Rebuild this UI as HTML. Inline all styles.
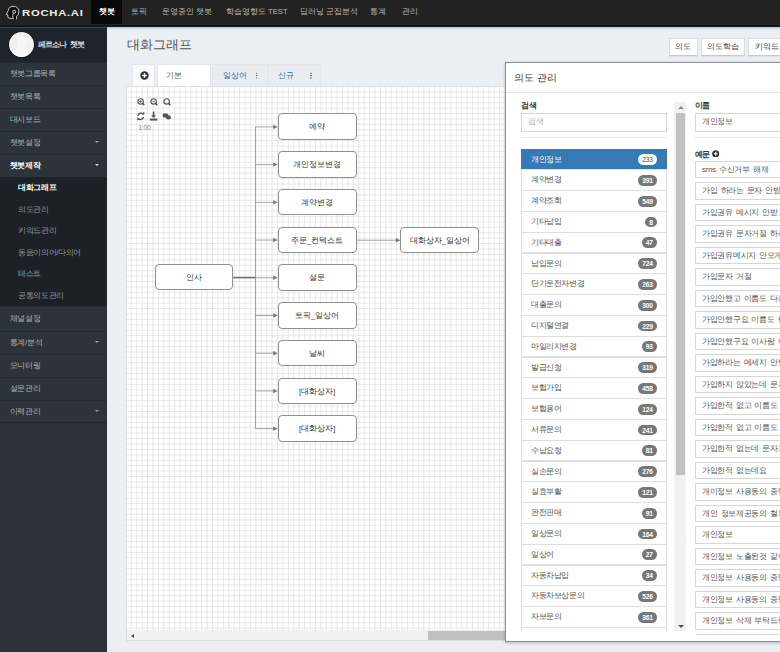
<!DOCTYPE html>
<html><head><meta charset="utf-8">
<style>
*{box-sizing:border-box;margin:0;padding:0}
html,body{width:780px;height:652px;overflow:hidden;background:#ebeef2;font-family:"Liberation Sans",sans-serif;}
.abs{position:absolute}
#nav{left:0;top:0;width:780px;height:26.5px;background:#222222;border-bottom:2px solid #0f1820}
#nav .it{position:absolute;top:0;height:24.3px;line-height:24px;font-size:7.6px;color:#b9b9b9;white-space:nowrap}
#nav .act{left:91px;width:31px;background:#090909;color:#fff;font-weight:bold;text-align:center}
#side{left:0;top:28px;width:107px;height:624px;background:#2d333a}
#prof{left:0;top:0;width:107px;height:34px;background:#1e242b}
.mi{position:absolute;left:0;width:107px;height:23px;line-height:22px;padding-left:9.6px;font-size:8px;letter-spacing:-0.3px;color:#adb2b7;border-top:1px solid #262b31;white-space:nowrap}
.mi .car{position:absolute;left:95px;top:9.2px;width:0;height:0;border-left:2.5px solid transparent;border-right:2.5px solid transparent;border-top:2.5px solid #9aa0a6}
#sub{left:0;top:149px;width:107px;height:129px;background:#1c2127}
.si{position:absolute;left:18px;height:21.5px;line-height:21.5px;font-size:8px;letter-spacing:-0.35px;color:#8f959b;white-space:nowrap}

.btn{top:37.7px;height:18.3px;background:#fff;border:1px solid #dcdcdc;border-bottom-color:#c8c8c8;font-size:8px;line-height:16.5px;text-align:center;color:#444;white-space:nowrap;box-shadow:0 1px 0 rgba(0,0,0,0.05)}
.tab{top:63.8px;height:22px;border:1px solid #e3e6ea;border-bottom:none;font-size:7.6px;line-height:21px;white-space:nowrap}
.t2{background:#e9ecf0;color:#3a6b9e}
.keb{position:absolute;top:7.5px;width:1.6px;height:7px;background:radial-gradient(circle,#666 0.8px,transparent 0.9px) 0 0/1.6px 2.4px repeat-y}
.pl{position:absolute;width:8.5px;height:8.5px;border-radius:50%;background:#333}
.pl:before{content:"";position:absolute;left:1.9px;top:3.6px;width:4.7px;height:1.3px;background:#fff}
.pl:after{content:"";position:absolute;left:3.6px;top:1.9px;width:1.3px;height:4.7px;background:#fff}
#canvas{left:126px;top:85.6px;width:400px;height:555.5px;background:#fff;border:1px solid #d9dce0;overflow:hidden}
#grid{left:0;top:0;width:100%;height:100%;background-image:linear-gradient(to right,#e2e2e2 0.6px,transparent 0.6px),linear-gradient(to bottom,#e2e2e2 0.6px,transparent 0.6px);background-size:5.4167px 5.4167px;background-position:4.5px 4px}

.node{position:absolute;width:79px;height:26.5px;border:0.8px solid #8f8f8f;border-radius:4px;background:#fff;font-size:7.6px;line-height:25px;text-align:center;color:#333;white-space:nowrap}
.edges path{stroke:#777;stroke-width:0.65;fill:none}
.edges path.ah{fill:#777;stroke:none}

#modal{left:505px;top:62px;width:300px;height:579.5px;background:#fff;border:1px solid #909090;overflow:hidden;box-shadow:0 1px 3px rgba(0,0,0,0.25)}
.lbl{font-size:8px;letter-spacing:-0.4px;font-weight:bold;color:#333;line-height:10px;white-space:nowrap}
.inp{height:18.8px;border:0.8px solid #d6d6d6;font-size:8px;letter-spacing:-0.3px;word-spacing:1.2px;line-height:16.5px;padding-left:6px;white-space:nowrap;overflow:hidden;background:#fff}
.ex{width:200px;height:17.8px;color:#555}
.li{position:absolute;left:0;width:145.8px;height:21.45px;border:1px solid #dfdfdf;background:#fff;font-size:8px;letter-spacing:-0.4px;line-height:20px;padding-left:9px;color:#555;white-space:nowrap}
.li.act{background:#337ab7;border-color:#337ab7;color:#fff}
.bdg{position:absolute;right:9px;top:4.6px;height:10.8px;min-width:10.8px;padding:0 4.2px;border-radius:5.4px;background:#777;color:#fff;font-size:6.6px;font-weight:bold;line-height:11.6px;text-align:center;letter-spacing:-0.2px}
.li.act .bdg{background:#fff;color:#4a4a4a;font-weight:normal}
</style></head>
<body>
<!-- NAVBAR -->
<div id="nav" class="abs">
  <svg class="abs" style="left:0;top:0" width="22" height="24" viewBox="0 0 22 24">
<path d="M16.6 19.3V16.4Q19 14.6 18.8 11.3Q18.3 6.3 13.3 6.3Q8.6 6.5 8.2 10.6L6.4 14.3L7.8 14.7V16.6Q7.9 18.4 9.6 18.4H13.9" stroke="#e6e6e6" stroke-width="0.85" fill="#0c0c0c"/>
<circle cx="14.2" cy="11.8" r="1.55" stroke="#e6e6e6" stroke-width="0.85" fill="none"/>
<path d="M13.3 13.2Q12.5 15.4 12.9 17.9" stroke="#e6e6e6" stroke-width="0.85" fill="none"/>
</svg>
  <div class="abs" style="left:22.2px;top:6px;font-size:9.5px;font-weight:bold;color:#eeeeee;letter-spacing:0.6px;line-height:14px;transform:scaleX(1.19);transform-origin:0 0;white-space:nowrap">ROCHA.AI</div>
  <div class="it act">챗봇</div>
  <div class="it" style="left:130.6px">토픽</div>
  <div class="it" style="left:162px">운영중인 챗봇</div>
  <div class="it" style="left:226px">학습영향도 TEST</div>
  <div class="it" style="left:299.5px">딥러닝 군집분석</div>
  <div class="it" style="left:370px">통계</div>
  <div class="it" style="left:402px">관리</div>
</div>

<div class="abs" style="left:0;top:26.5px;width:107px;height:1.5px;background:#2d4357"></div>
<div class="abs" style="left:107px;top:26.5px;width:673px;height:3.5px;background:linear-gradient(#b9c5d0,#ebeef2)"></div>
<!-- SIDEBAR -->
<div id="side" class="abs">
  <div id="prof" class="abs">
    <div class="abs" style="left:9px;top:4px;width:25px;height:25px;border-radius:50%;background:#f0f0f0;overflow:hidden;box-shadow:0 0 0 0.8px #15191d">
      <div class="abs" style="left:7.5px;top:4px;width:10px;height:12px;border-radius:50%;background:#f7f7f7"></div>
      <div class="abs" style="left:3px;top:15px;width:19px;height:14px;border-radius:50%;background:#f7f7f7"></div>
    </div>
    <div class="abs" style="left:38px;top:0;line-height:33px;font-size:8px;letter-spacing:-0.9px;word-spacing:2.5px;font-weight:bold;color:#d8d8d8;white-space:nowrap">페르소나 챗봇</div>
  </div>
  <div class="mi" style="top:34px">챗봇그룹목록</div>
  <div class="mi" style="top:57px">챗봇목록</div>
  <div class="mi" style="top:80px">대시보드</div>
  <div class="mi" style="top:103px">챗봇설정<span class="car"></span></div>
  <div class="mi" style="top:126px;color:#fff;font-weight:bold">챗봇제작<span class="car" style="border-top-color:#ddd"></span></div>
  <div id="sub" class="abs">
    <div class="si" style="top:0;color:#fff;font-weight:bold">대화그래프</div>
    <div class="si" style="top:21.5px">의도관리</div>
    <div class="si" style="top:43px">키워드관리</div>
    <div class="si" style="top:64.5px">동음이의어/다의어</div>
    <div class="si" style="top:86px">테스트</div>
    <div class="si" style="top:107.5px">공통의도관리</div>
  </div>
  <div class="mi" style="top:278.4px;height:24.3px;line-height:23.5px">채널설정</div>
  <div class="mi" style="top:302.7px">통계/분석<span class="car"></span></div>
  <div class="mi" style="top:326.1px">모니터링</div>
  <div class="mi" style="top:349px">설문관리</div>
  <div class="mi" style="top:371.8px;border-bottom:1px solid #22272c">이력관리<span class="car"></span></div>
</div>


<!-- MAIN HEADER -->
<div class="abs" style="left:127px;top:34.5px;font-size:13px;line-height:20px;color:#555;white-space:nowrap">대화그래프</div>
<div class="btn abs" style="left:668.5px;width:29px">의도</div>
<div class="btn abs" style="left:700.5px;width:44px">의도학습</div>
<div class="btn abs" style="left:747.5px;width:44px;text-align:left;padding-left:6.5px">키워드</div>

<!-- TABS -->
<div class="tab abs" style="left:131.8px;width:23.5px;background:#fafafa"><svg class="abs" style="left:7.2px;top:5.8px" width="9" height="9" viewBox="0 0 9 9"><circle cx="4.5" cy="4.5" r="4.2" fill="#333"/><path d="M2.2 4.5H6.8M4.5 2.2V6.8" stroke="#fff" stroke-width="1.3"/></svg></div>
<div class="tab abs" style="left:157.4px;width:54px;background:#fff;color:#555;padding-left:8px">기본</div>
<div class="tab abs t2" style="left:211.7px;width:56.5px;padding-left:10px">일상어<span class="keb" style="left:43px"></span></div>
<div class="tab abs t2" style="left:268px;width:53px;padding-left:9px">신규<span class="keb" style="left:41.3px"></span></div>

<!-- CANVAS -->
<div id="canvas" class="abs">
  <svg class="abs" style="left:0;top:0" width="400" height="556"><path d="M4.27 0V556M9.69 0V556M15.10 0V556M20.52 0V556M25.94 0V556M31.35 0V556M36.77 0V556M42.19 0V556M47.60 0V556M53.02 0V556M58.44 0V556M63.85 0V556M69.27 0V556M74.69 0V556M80.10 0V556M85.52 0V556M90.94 0V556M96.35 0V556M101.77 0V556M107.19 0V556M112.60 0V556M118.02 0V556M123.44 0V556M128.85 0V556M134.27 0V556M139.69 0V556M145.10 0V556M150.52 0V556M155.94 0V556M161.35 0V556M166.77 0V556M172.19 0V556M177.60 0V556M183.02 0V556M188.44 0V556M193.85 0V556M199.27 0V556M204.69 0V556M210.10 0V556M215.52 0V556M220.94 0V556M226.35 0V556M231.77 0V556M237.19 0V556M242.60 0V556M248.02 0V556M253.44 0V556M258.85 0V556M264.27 0V556M269.69 0V556M275.10 0V556M280.52 0V556M285.94 0V556M291.35 0V556M296.77 0V556M302.19 0V556M307.60 0V556M313.02 0V556M318.44 0V556M323.85 0V556M329.27 0V556M334.69 0V556M340.10 0V556M345.52 0V556M350.94 0V556M356.35 0V556M361.77 0V556M367.19 0V556M372.60 0V556M378.02 0V556M383.44 0V556M388.85 0V556M394.27 0V556M399.69 0V556M0 4.92H400M0 10.34H400M0 15.75H400M0 21.17H400M0 26.59H400M0 32.00H400M0 37.42H400M0 42.84H400M0 48.25H400M0 53.67H400M0 59.09H400M0 64.50H400M0 69.92H400M0 75.34H400M0 80.75H400M0 86.17H400M0 91.59H400M0 97.00H400M0 102.42H400M0 107.84H400M0 113.25H400M0 118.67H400M0 124.09H400M0 129.50H400M0 134.92H400M0 140.34H400M0 145.75H400M0 151.17H400M0 156.59H400M0 162.00H400M0 167.42H400M0 172.84H400M0 178.25H400M0 183.67H400M0 189.09H400M0 194.50H400M0 199.92H400M0 205.34H400M0 210.75H400M0 216.17H400M0 221.59H400M0 227.00H400M0 232.42H400M0 237.84H400M0 243.25H400M0 248.67H400M0 254.09H400M0 259.50H400M0 264.92H400M0 270.34H400M0 275.75H400M0 281.17H400M0 286.59H400M0 292.00H400M0 297.42H400M0 302.84H400M0 308.25H400M0 313.67H400M0 319.09H400M0 324.50H400M0 329.92H400M0 335.34H400M0 340.75H400M0 346.17H400M0 351.59H400M0 357.00H400M0 362.42H400M0 367.84H400M0 373.25H400M0 378.67H400M0 384.09H400M0 389.50H400M0 394.92H400M0 400.34H400M0 405.75H400M0 411.17H400M0 416.59H400M0 422.00H400M0 427.42H400M0 432.84H400M0 438.25H400M0 443.67H400M0 449.09H400M0 454.50H400M0 459.92H400M0 465.34H400M0 470.75H400M0 476.17H400M0 481.59H400M0 487.00H400M0 492.42H400M0 497.84H400M0 503.25H400M0 508.67H400M0 514.09H400M0 519.50H400M0 524.92H400M0 530.34H400M0 535.75H400M0 541.17H400M0 546.59H400M0 552.00H400" stroke="#d6d6d6" stroke-width="0.55" fill="none"/></svg>
<svg class="abs" style="left:9.3px;top:10.3px" width="40" height="40" viewBox="0 0 40 40">
<g fill="none" stroke="#555" stroke-width="1.1">
<circle cx="4.6" cy="4.4" r="2.7"/><path d="M6.6 6.4L8.3 8.1" stroke-width="1.5"/><path d="M3.3 4.4H5.9M4.6 3.1V5.7" stroke-width="0.8"/>
<circle cx="17.6" cy="4.4" r="2.7"/><path d="M19.6 6.4L21.3 8.1" stroke-width="1.5"/><path d="M16.3 4.4H18.9" stroke-width="0.8"/>
<circle cx="30.6" cy="4.4" r="2.7"/><path d="M32.6 6.4L34.3 8.1" stroke-width="1.5"/>
<path d="M1.9 18.8 A3 3 0 0 1 7.3 17.4M7.6 19.9 A3 3 0 0 1 2.2 21.3" stroke-width="1.4"/>
</g>
<g fill="#555">
<path d="M5.6 16.2L8.4 15L8.2 18.2Z"/><path d="M4 22.2L1.2 23.4L1.4 20.3Z"/>
<path d="M16.8 14.6H18.4V18.2H20.1L17.6 20.9L15.1 18.2H16.8Z"/><path d="M13.9 21.6H21.3V23.6H13.9Z"/>
<ellipse cx="29.4" cy="18.4" rx="2.8" ry="2.2"/><ellipse cx="32.4" cy="20.4" rx="2.6" ry="2.1"/>
</g>
</svg>
<div class="abs" style="left:11.2px;top:37.5px;font-size:7px;letter-spacing:-0.3px;color:#8a8a8a;line-height:8px">1:00</div>
<svg class="abs edges" style="left:-1px;top:-1px" width="400" height="556"><path d="M129.50 40.90H147.70"/><path class="ah" d="M147.20 38.70L151.70 40.90L147.20 43.10Z"/><path d="M129.50 78.62H147.70"/><path class="ah" d="M147.20 76.42L151.70 78.62L147.20 80.82Z"/><path d="M129.50 116.34H147.70"/><path class="ah" d="M147.20 114.14L151.70 116.34L147.20 118.54Z"/><path d="M129.50 154.06H147.70"/><path class="ah" d="M147.20 151.86L151.70 154.06L147.20 156.26Z"/><path d="M129.50 191.78H147.70"/><path class="ah" d="M147.20 189.58L151.70 191.78L147.20 193.98Z"/><path d="M129.50 229.50H147.70"/><path class="ah" d="M147.20 227.30L151.70 229.50L147.20 231.70Z"/><path d="M129.50 267.22H147.70"/><path class="ah" d="M147.20 265.02L151.70 267.22L147.20 269.42Z"/><path d="M129.50 304.94H147.70"/><path class="ah" d="M147.20 302.74L151.70 304.94L147.20 307.14Z"/><path d="M129.50 342.66H147.70"/><path class="ah" d="M147.20 340.46L151.70 342.66L147.20 344.86Z"/><path d="M129.50 40.90V342.66"/><path d="M107.30 191.60H129.50" style="stroke:#6a6a6a;stroke-width:1.5"/><path d="M230.70 154.20H270.30"/><path class="ah" d="M269.80 152.00L274.30 154.20L269.80 156.40Z"/></svg>
<div class="node" style="left:150.70px;top:26.90px">예약</div>
<div class="node" style="left:150.70px;top:64.62px">개인정보변경</div>
<div class="node" style="left:150.70px;top:102.34px">계약변경</div>
<div class="node" style="left:150.70px;top:140.06px">주문_컨텍스트</div>
<div class="node" style="left:150.70px;top:177.78px">설문</div>
<div class="node" style="left:150.70px;top:215.50px">토픽_일상어</div>
<div class="node" style="left:150.70px;top:253.22px">날씨</div>
<div class="node" style="left:150.70px;top:290.94px">[대화상자]</div>
<div class="node" style="left:150.70px;top:328.66px">[대화상자]</div>
<div class="node" style="left:28.10px;top:177.20px;width:78.2px">인사</div>
<div class="node" style="left:273.30px;top:140.10px">대화상자_일상어</div>
<div class="abs" style="left:0;top:543.5px;width:400px;height:11.5px;background:#f1f1f1"></div>
<div class="abs" style="left:300.5px;top:544.8px;width:100px;height:9.2px;background:#c1c1c1"></div>
<div class="abs" style="left:4.4px;top:547.5px;width:0;height:0;border-top:2.6px solid transparent;border-bottom:2.6px solid transparent;border-right:3.2px solid #505050"></div>
</div>

<div id="modal" class="abs">
<div class="abs" style="left:7.50px;top:7.5px;font-size:10px;letter-spacing:0.3px;line-height:14px;color:#333;white-space:nowrap">의도 관리</div>
<div class="abs" style="left:0;top:29.30px;width:300px;height:0.8px;background:#e5e5e5"></div>
<div class="lbl abs" style="left:15.00px;top:37.80px">검색</div>
<div class="inp abs" style="left:15.10px;top:50.20px;width:145.5px;color:#aaa">검색</div>
<div class="abs" style="left:15.10px;top:74.00px;width:145.5px;height:0.8px;background:#e8e8e8"></div>
<div class="abs" style="left:15.10px;top:85.70px;width:145.8px;height:482.6px;overflow:hidden">
<div class="li act" style="top:0.00px">개인정보<span class="bdg">233</span></div>
<div class="li" style="top:20.80px">계약변경<span class="bdg">391</span></div>
<div class="li" style="top:41.60px">계약조회<span class="bdg">549</span></div>
<div class="li" style="top:62.40px">기타납입<span class="bdg">8</span></div>
<div class="li" style="top:83.20px">기타대출<span class="bdg">47</span></div>
<div class="li" style="top:104.00px">납입문의<span class="bdg">724</span></div>
<div class="li" style="top:124.80px">단기운전자변경<span class="bdg">263</span></div>
<div class="li" style="top:145.60px">대출문의<span class="bdg">300</span></div>
<div class="li" style="top:166.40px">디지털연결<span class="bdg">229</span></div>
<div class="li" style="top:187.20px">마일리지변경<span class="bdg">93</span></div>
<div class="li" style="top:208.00px">발급신청<span class="bdg">319</span></div>
<div class="li" style="top:228.80px">보험가입<span class="bdg">458</span></div>
<div class="li" style="top:249.60px">보험용어<span class="bdg">124</span></div>
<div class="li" style="top:270.40px">서류문의<span class="bdg">241</span></div>
<div class="li" style="top:291.20px">수납요청<span class="bdg">81</span></div>
<div class="li" style="top:312.00px">실손문의<span class="bdg">276</span></div>
<div class="li" style="top:332.80px">실효부활<span class="bdg">121</span></div>
<div class="li" style="top:353.60px">완전판매<span class="bdg">91</span></div>
<div class="li" style="top:374.40px">일상문의<span class="bdg">164</span></div>
<div class="li" style="top:395.20px">일상어<span class="bdg">27</span></div>
<div class="li" style="top:416.00px">자동차납입<span class="bdg">34</span></div>
<div class="li" style="top:436.80px">자동차보상문의<span class="bdg">526</span></div>
<div class="li" style="top:457.60px">자보문의<span class="bdg">361</span></div>
<div class="li" style="top:478.40px">자동차사고<span class="bdg">88</span></div>
</div>
<div class="abs" style="left:168.00px;top:39.00px;width:12px;height:529px;background:#f1f1f1"></div>
<div class="abs" style="left:170.20px;top:50.00px;width:9.2px;height:362px;background:#c1c1c1"></div>
<div class="abs" style="left:171.60px;top:43.30px;width:0;height:0;border-left:3px solid transparent;border-right:3px solid transparent;border-bottom:3px solid #8a8a8a"></div>
<div class="abs" style="left:172.00px;top:561.50px;width:0;height:0;border-left:3px solid transparent;border-right:3px solid transparent;border-top:3px solid #505050"></div>
<div class="lbl abs" style="left:188.50px;top:37.80px">이름</div>
<div class="inp abs" style="left:189.00px;top:50.00px;width:120px;color:#555">개인정보</div>
<div class="abs" style="left:189.00px;top:74.00px;width:120px;height:0.8px;background:#e8e8e8"></div>
<div class="lbl abs" style="left:188.50px;top:85.50px">예문 <svg style="position:relative;top:1px" width="7.5" height="7.5" viewBox="0 0 9 9"><circle cx="4.5" cy="4.5" r="4.3" fill="#333"/><path d="M2.2 4.5H6.8M4.5 2.2V6.8" stroke="#fff" stroke-width="1.4"/></svg></div>
<div class="inp abs ex" style="left:189.00px;top:97.50px">sms 수신거부 해제</div>
<div class="inp abs ex" style="left:189.00px;top:119.00px">가입 하라는 문자 안받고 싶어요</div>
<div class="inp abs ex" style="left:189.00px;top:140.50px">가입권유 메시지 안받고 싶어요</div>
<div class="inp abs ex" style="left:189.00px;top:162.00px">가입권유 문자거절 하려구요</div>
<div class="inp abs ex" style="left:189.00px;top:183.50px">가입권유메시지 안오게 해주세요</div>
<div class="inp abs ex" style="left:189.00px;top:205.00px">가입문자 거절</div>
<div class="inp abs ex" style="left:189.00px;top:226.50px">가입안했고 이름도 다른데요</div>
<div class="inp abs ex" style="left:189.00px;top:248.00px">가입안했구요 이름도 틀려요</div>
<div class="inp abs ex" style="left:189.00px;top:269.50px">가입안했구요 이사람 아닙니다</div>
<div class="inp abs ex" style="left:189.00px;top:291.00px">가입하라는 메세지 안받고 싶어요</div>
<div class="inp abs ex" style="left:189.00px;top:312.50px">가입하지 않았는데 문자가 와요</div>
<div class="inp abs ex" style="left:189.00px;top:334.00px">가입한적 없고 이름도 다릅니다</div>
<div class="inp abs ex" style="left:189.00px;top:355.50px">가입한적 없고 이름도 틀려요</div>
<div class="inp abs ex" style="left:189.00px;top:377.00px">가입한적 없는데 문자가 와요</div>
<div class="inp abs ex" style="left:189.00px;top:398.50px">가입한적 없는데요</div>
<div class="inp abs ex" style="left:189.00px;top:420.00px">개이정보 사용동의 중단해주세요</div>
<div class="inp abs ex" style="left:189.00px;top:441.50px">개인 정보제공동의 철회하고 싶어요</div>
<div class="inp abs ex" style="left:189.00px;top:463.00px">개인정보</div>
<div class="inp abs ex" style="left:189.00px;top:484.50px">개인정보 노출된것 같아요</div>
<div class="inp abs ex" style="left:189.00px;top:506.00px">개인정보 사용동의 중단하고 싶어요</div>
<div class="inp abs ex" style="left:189.00px;top:527.50px">개인정보 사용동의 중단해주세요</div>
<div class="inp abs ex" style="left:189.00px;top:549.00px">개인정보 삭제 부탁드립니다</div>
<div class="abs" style="left:189.5px;top:570.50px;width:200px;height:0.8px;background:#d8d8d8"></div>
</div>
</body></html>
